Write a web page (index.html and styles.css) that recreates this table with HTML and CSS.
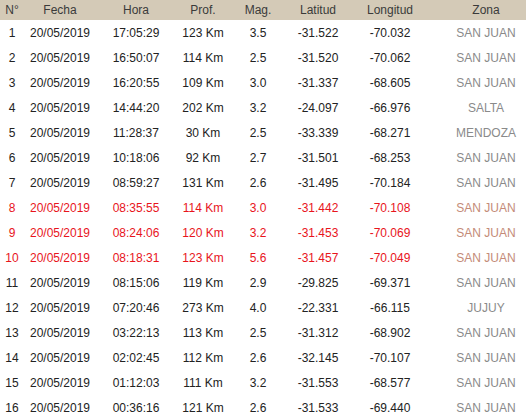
FILE: index.html
```html
<!DOCTYPE html>
<html>
<head>
<meta charset="utf-8">
<link rel="stylesheet" href="styles.css">
</head>
<body>
<table class="sismos">
<colgroup>
<col class="c-n"><col class="c-fecha"><col class="c-hora"><col class="c-prof"><col class="c-mag"><col class="c-lat"><col class="c-lon"><col class="c-zona">
</colgroup>
<thead>
<tr><th>N°</th><th>Fecha</th><th>Hora</th><th>Prof.</th><th>Mag.</th><th>Latitud</th><th>Longitud</th><th class="zona">Zona</th></tr>
</thead>
<tbody>
<tr><td>1</td><td>20/05/2019</td><td>17:05:29</td><td>123 Km</td><td>3.5</td><td>-31.522</td><td>-70.032</td><td class="zona">SAN JUAN</td></tr>
<tr><td>2</td><td>20/05/2019</td><td>16:50:07</td><td>114 Km</td><td>2.5</td><td>-31.520</td><td>-70.062</td><td class="zona">SAN JUAN</td></tr>
<tr><td>3</td><td>20/05/2019</td><td>16:20:55</td><td>109 Km</td><td>3.0</td><td>-31.337</td><td>-68.605</td><td class="zona">SAN JUAN</td></tr>
<tr><td>4</td><td>20/05/2019</td><td>14:44:20</td><td>202 Km</td><td>3.2</td><td>-24.097</td><td>-66.976</td><td class="zona">SALTA</td></tr>
<tr><td>5</td><td>20/05/2019</td><td>11:28:37</td><td>30 Km</td><td>2.5</td><td>-33.339</td><td>-68.271</td><td class="zona">MENDOZA</td></tr>
<tr><td>6</td><td>20/05/2019</td><td>10:18:06</td><td>92 Km</td><td>2.7</td><td>-31.501</td><td>-68.253</td><td class="zona">SAN JUAN</td></tr>
<tr><td>7</td><td>20/05/2019</td><td>08:59:27</td><td>131 Km</td><td>2.6</td><td>-31.495</td><td>-70.184</td><td class="zona">SAN JUAN</td></tr>
<tr class="sentido"><td>8</td><td>20/05/2019</td><td>08:35:55</td><td>114 Km</td><td>3.0</td><td>-31.442</td><td>-70.108</td><td class="zona">SAN JUAN</td></tr>
<tr class="sentido"><td>9</td><td>20/05/2019</td><td>08:24:06</td><td>120 Km</td><td>3.2</td><td>-31.453</td><td>-70.069</td><td class="zona">SAN JUAN</td></tr>
<tr class="sentido"><td>10</td><td>20/05/2019</td><td>08:18:31</td><td>123 Km</td><td>5.6</td><td>-31.457</td><td>-70.049</td><td class="zona">SAN JUAN</td></tr>
<tr><td>11</td><td>20/05/2019</td><td>08:15:06</td><td>119 Km</td><td>2.9</td><td>-29.825</td><td>-69.371</td><td class="zona">SAN JUAN</td></tr>
<tr><td>12</td><td>20/05/2019</td><td>07:20:46</td><td>273 Km</td><td>4.0</td><td>-22.331</td><td>-66.115</td><td class="zona">JUJUY</td></tr>
<tr><td>13</td><td>20/05/2019</td><td>03:22:13</td><td>113 Km</td><td>2.5</td><td>-31.312</td><td>-68.902</td><td class="zona">SAN JUAN</td></tr>
<tr><td>14</td><td>20/05/2019</td><td>02:02:45</td><td>112 Km</td><td>2.6</td><td>-32.145</td><td>-70.107</td><td class="zona">SAN JUAN</td></tr>
<tr><td>15</td><td>20/05/2019</td><td>01:12:03</td><td>111 Km</td><td>3.2</td><td>-31.553</td><td>-68.577</td><td class="zona">SAN JUAN</td></tr>
<tr><td>16</td><td>20/05/2019</td><td>00:36:16</td><td>121 Km</td><td>2.6</td><td>-31.533</td><td>-69.440</td><td class="zona">SAN JUAN</td></tr>
</tbody>
</table>
</body>
</html>
```
FILE: styles.css
```css
html, body {
  margin: 0;
  padding: 0;
  background: #fff;
}
body {
  font-family: "Liberation Sans", Arial, sans-serif;
  font-size: 12px;
  color: #222;
}
.sismos {
  width: 526px;
  border-collapse: collapse;
  table-layout: fixed;
}
.c-n { width: 24px; }
.c-fecha { width: 72px; }
.c-hora { width: 80px; }
.c-prof { width: 54px; }
.c-mag { width: 56px; }
.c-lat { width: 64px; }
.c-lon { width: 80px; }
.c-zona { width: 96px; }
.sismos th {
  height: 20px;
  padding: 0;
  background: #d4cab7;
  color: #3a3a3a;
  font-weight: normal;
  text-align: center;
}
.sismos td {
  height: 25px;
  padding: 0;
  text-align: center;
  white-space: nowrap;
}
.sismos .zona {
  padding-left: 16px;
}
.sismos td.zona {
  color: #8a8a8a;
}
.sentido td {
  color: #e8141c;
}
.sentido td.zona {
  color: #c48b78;
}
```
